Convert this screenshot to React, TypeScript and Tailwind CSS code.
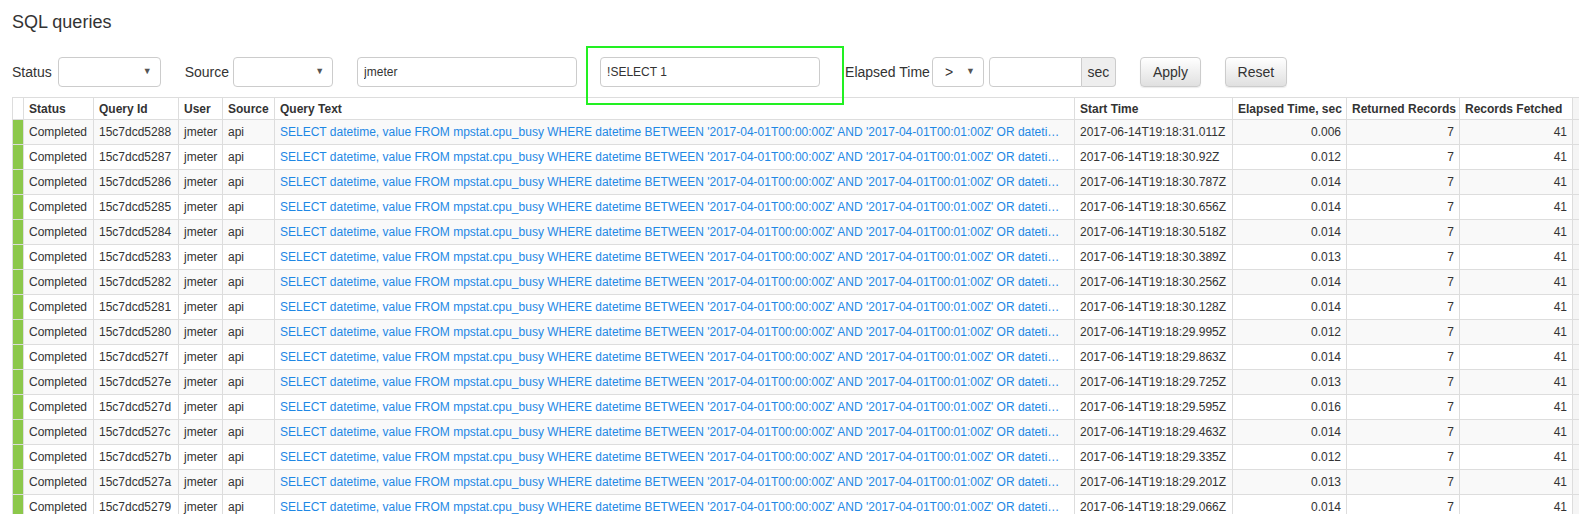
import React from "react";

const rows = [
	["15c7dcd5288", "2017-06-14T19:18:31.011Z", "0.006"],
	["15c7dcd5287", "2017-06-14T19:18:30.92Z", "0.012"],
	["15c7dcd5286", "2017-06-14T19:18:30.787Z", "0.014"],
	["15c7dcd5285", "2017-06-14T19:18:30.656Z", "0.014"],
	["15c7dcd5284", "2017-06-14T19:18:30.518Z", "0.014"],
	["15c7dcd5283", "2017-06-14T19:18:30.389Z", "0.013"],
	["15c7dcd5282", "2017-06-14T19:18:30.256Z", "0.014"],
	["15c7dcd5281", "2017-06-14T19:18:30.128Z", "0.014"],
	["15c7dcd5280", "2017-06-14T19:18:29.995Z", "0.012"],
	["15c7dcd527f", "2017-06-14T19:18:29.863Z", "0.014"],
	["15c7dcd527e", "2017-06-14T19:18:29.725Z", "0.013"],
	["15c7dcd527d", "2017-06-14T19:18:29.595Z", "0.016"],
	["15c7dcd527c", "2017-06-14T19:18:29.463Z", "0.014"],
	["15c7dcd527b", "2017-06-14T19:18:29.335Z", "0.012"],
	["15c7dcd527a", "2017-06-14T19:18:29.201Z", "0.013"],
	["15c7dcd5279", "2017-06-14T19:18:29.066Z", "0.014"],
];

const queryText =
	"SELECT datetime, value FROM mpstat.cpu_busy WHERE datetime BETWEEN '2017-04-01T00:00:00Z' AND '2017-04-01T00:01:00Z' OR datetime BETWEEN '2017-04-01T00:02:00Z' AND '2017-04-01T00:03:00Z'";

function Select({ width, value }: { width: string; value?: string }) {
	return (
		<div
			className={`${width} h-[30px] border border-[#ccc] rounded-[4px] bg-white flex items-center justify-between pl-[12px] pr-[8px] text-[14px] text-[#333]`}
		>
			<span>{value ?? ""}</span>
			<span className="text-[9px] text-[#555]">▼</span>
		</div>
	);
}

function Button({ label, width }: { label: string; width: string }) {
	return (
		<button
			className={`${width} h-[30px] border border-[#ccc] rounded-[4px] bg-gradient-to-b from-white to-[#e0e0e0] text-[14px] text-[#333] shadow-[0_1px_1px_rgba(0,0,0,0.08)]`}
		>
			{label}
		</button>
	);
}

export default function App() {
	return (
		<div className="w-[1579px] h-[514px] overflow-hidden bg-white font-['Liberation_Sans',Arial,sans-serif] text-[#333]">
			<h1 className="text-[18px] leading-[20px] pl-[12px] pt-[12px]">SQL queries</h1>

			{/* filters */}
			<div className="flex items-center h-[30px] mt-[25px] pl-[12px] text-[14px]">
				<span>Status</span>
				<div className="ml-[6px]">
					<Select width="w-[103px]" />
				</div>
				<span className="ml-[24px]">Source</span>
				<div className="ml-[4px]">
					<Select width="w-[100px]" />
				</div>
				<input
					readOnly
					value="jmeter"
					className="ml-[24px] w-[220px] h-[30px] border border-[#ccc] rounded-[4px] px-[6px] text-[12px] text-[#333]"
				/>
				<div className="relative ml-[23px]">
					<input
						readOnly
						value="!SELECT 1"
						className="w-[220px] h-[30px] border border-[#ccc] rounded-[4px] px-[6px] text-[12px] text-[#333]"
					/>
					<div className="absolute left-[-14px] top-[-11px] w-[258px] h-[59px] border-2 border-[#22f022] pointer-events-none" />
				</div>
				<span className="ml-[25px]">Elapsed Time</span>
				<div className="ml-[2px]">
					<Select width="w-[52px]" value=">" />
				</div>
				<div className="ml-[5px] flex h-[30px]">
					<div className="w-[93px] border border-[#ccc] rounded-l-[4px] bg-white" />
					<div className="w-[34px] border border-l-0 border-[#ccc] rounded-r-[4px] bg-[#eee] flex items-center justify-center text-[14px]">
						sec
					</div>
				</div>
				<div className="ml-[24px]">
					<Button label="Apply" width="w-[61px]" />
				</div>
				<div className="ml-[24px]">
					<Button label="Reset" width="w-[62px]" />
				</div>
			</div>

			{/* table */}
			<div className="mt-[10px] pl-[12px] overflow-hidden">
				<table className="table-fixed border-collapse w-[1600px] text-[12px] leading-[14px]">
					<colgroup>
						<col className="w-[11px]" />
						<col className="w-[70px]" />
						<col className="w-[85px]" />
						<col className="w-[44px]" />
						<col className="w-[52px]" />
						<col className="w-[800px]" />
						<col className="w-[158px]" />
						<col className="w-[114px]" />
						<col className="w-[113px]" />
						<col className="w-[113px]" />
						<col className="w-[40px]" />
					</colgroup>
					<thead>
						<tr className="h-[22px] font-bold text-left">
							<th className="border border-[#ddd]" />
							<th className="border border-[#ddd] px-[5px]">Status</th>
							<th className="border border-[#ddd] px-[5px]">Query Id</th>
							<th className="border border-[#ddd] px-[5px]">User</th>
							<th className="border border-[#ddd] px-[5px]">Source</th>
							<th className="border border-[#ddd] px-[5px]">Query Text</th>
							<th className="border border-[#ddd] px-[5px]">Start Time</th>
							<th className="border border-[#ddd] px-[5px] whitespace-nowrap">Elapsed Time, sec</th>
							<th className="border border-[#ddd] px-[5px] whitespace-nowrap">Returned Records</th>
							<th className="border border-[#ddd] px-[5px] whitespace-nowrap">Records Fetched</th>
							<th className="border border-[#ddd] bg-[#f5f5f5]" />
						</tr>
					</thead>
					<tbody>
						{rows.map(([id, start, elapsed], i) => (
							<tr key={id} className={`h-[25px] ${i % 2 === 0 ? "bg-[#f9f9f9]" : "bg-white"}`}>
								<td className="border border-[#ddd] bg-[#8cc84b]" />
								<td className="border border-[#ddd] px-[5px]">Completed</td>
								<td className="border border-[#ddd] px-[5px]">{id}</td>
								<td className="border border-[#ddd] px-[5px]">jmeter</td>
								<td className="border border-[#ddd] px-[5px]">api</td>
								<td className="border border-[#ddd] px-[5px] text-[#1e88e5] truncate">{queryText}</td>
								<td className="border border-[#ddd] px-[5px] whitespace-nowrap">{start}</td>
								<td className="border border-[#ddd] px-[5px] text-right">{elapsed}</td>
								<td className="border border-[#ddd] px-[5px] text-right">7</td>
								<td className="border border-[#ddd] px-[5px] text-right">41</td>
								<td className="border border-[#ddd] bg-[#f5f5f5]" />
							</tr>
						))}
					</tbody>
				</table>
			</div>
		</div>
	);
}
